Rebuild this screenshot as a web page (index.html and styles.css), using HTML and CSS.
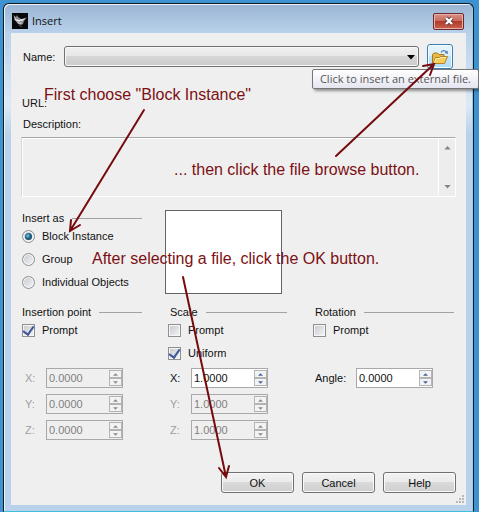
FILE: index.html
```html
<!DOCTYPE html>
<html lang="en">
<head>
<meta charset="utf-8">
<title>Insert</title>
<link rel="stylesheet" href="styles.css">
</head>
<body>
<main class="window">
  <header class="titlebar">
    <svg class="app-icon" viewBox="0 0 16 16" aria-hidden="true">
      <rect width="16" height="16" fill="#08080a"/>
      <path d="M1 2 L3 5 L2 6 L6 11 L9 12 L11 11 L12 8 L15 4 L12 6 L9 6 L6 4 L5 2 L4 4 Z" fill="#8b8d92"/>
      <path d="M2 3 L4 6 L7 7 L10 6 L14 5 L10 8 L8 8 L7 9 L3 7 Z" fill="#e4e6ea"/>
      <path d="M4 8 L7 10 L10 9 L9 11 L7 11 Z" fill="#c9cbd0"/>
      <path d="M3 5 L5 5 L5 6 Z" fill="#b14a42"/>
      <path d="M6 12 L10 13 L9 14 Z" fill="#55585f"/>
    </svg>
    <h1 class="title">Insert</h1>
    <button class="close" type="button" aria-label="Close">
      <svg viewBox="0 0 12 10" aria-hidden="true">
        <path d="M3 2 L9 8 M9 2 L3 8" stroke="#5b3a3c" stroke-width="4"/>
        <path d="M3 2 L9 8 M9 2 L3 8" stroke="#fff" stroke-width="2.4"/>
      </svg>
    </button>
  </header>

  <form class="content">
    <div class="name-row">
      <label for="name">Name:</label>
      <div class="combo">
        <select id="name"><option></option></select>
        <svg viewBox="0 0 8 5" aria-hidden="true"><path d="M0 0 H8 L4 4.5 Z" fill="#000"/></svg>
      </div>
      <button class="browse" type="button" aria-label="Browse" aria-describedby="tip">
        <svg viewBox="0 0 18 16" aria-hidden="true">
          <path d="M1.5 14 V5.5 L3 4 H6.5 L8 5.5 H13 V9 L12 14 Z" fill="#e8b84a" stroke="#a87a20"/>
          <path d="M2 14.5 L4.5 8.5 H8.5 L9.5 7.5 H16.5 L13.5 14.5 Z" fill="#f8cc5c" stroke="#b18326"/>
          <path d="M3.5 13.5 L5 9.5 H9 L10 8.5 H15" fill="none" stroke="#fff0ac"/>
          <path d="M10 3.5 C11 1 14 1 15.5 3" fill="none" stroke="#5b7fa9" stroke-width="1.2"/>
          <path d="M13.5 4 L17 5 L16.5 1.5 Z" fill="#5b7fa9"/>
        </svg>
        <span class="tooltip" id="tip" role="tooltip">Click to insert an external file.</span>
      </button>
    </div>

    <p class="url">URL:</p>
    <label class="desc-label" for="desc">Description:</label>
    <div class="desc">
      <textarea id="desc" disabled></textarea>
      <div class="scroll">
        <svg viewBox="0 0 8 5" aria-hidden="true"><path d="M0 4.5 H8 L4 0 Z" fill="#858585"/></svg>
        <svg viewBox="0 0 8 5" aria-hidden="true"><path d="M0 0 H8 L4 4.5 Z" fill="#858585"/></svg>
      </div>
    </div>

    <div class="columns middle">
      <section class="group">
        <h2 class="heading">Insert as</h2>
        <div class="options">
          <label class="option"><input type="radio" name="as" checked>Block Instance</label>
          <label class="option"><input type="radio" name="as">Group</label>
          <label class="option"><input type="radio" name="as">Individual Objects</label>
        </div>
      </section>
      <div class="preview"></div>
    </div>

    <div class="columns">
      <section class="group">
        <h2 class="heading">Insertion point</h2>
        <div class="checks">
          <label class="option"><input type="checkbox" checked>Prompt</label>
        </div>
        <div class="fields">
          <div class="field off"><label for="ix">X:</label><div class="spin"><input id="ix" type="text" value="0.0000" disabled><button type="button" disabled aria-label="Up"><svg viewBox="0 0 6 3"><path d="M0 3 H6 L3 0 Z"/></svg></button><button type="button" disabled aria-label="Down"><svg viewBox="0 0 6 3"><path d="M0 0 H6 L3 3 Z"/></svg></button></div></div>
          <div class="field off"><label for="iy">Y:</label><div class="spin"><input id="iy" type="text" value="0.0000" disabled><button type="button" disabled aria-label="Up"><svg viewBox="0 0 6 3"><path d="M0 3 H6 L3 0 Z"/></svg></button><button type="button" disabled aria-label="Down"><svg viewBox="0 0 6 3"><path d="M0 0 H6 L3 3 Z"/></svg></button></div></div>
          <div class="field off"><label for="iz">Z:</label><div class="spin"><input id="iz" type="text" value="0.0000" disabled><button type="button" disabled aria-label="Up"><svg viewBox="0 0 6 3"><path d="M0 3 H6 L3 0 Z"/></svg></button><button type="button" disabled aria-label="Down"><svg viewBox="0 0 6 3"><path d="M0 0 H6 L3 3 Z"/></svg></button></div></div>
        </div>
      </section>
      <section class="group">
        <h2 class="heading">Scale</h2>
        <div class="checks outdent">
          <label class="option"><input type="checkbox">Prompt</label>
          <label class="option"><input type="checkbox" checked>Uniform</label>
        </div>
        <div class="fields flush">
          <div class="field"><label for="sx">X:</label><div class="spin"><input id="sx" type="text" value="1.0000"><button type="button" aria-label="Up"><svg viewBox="0 0 6 3"><path d="M0 3 H6 L3 0 Z"/></svg></button><button type="button" aria-label="Down"><svg viewBox="0 0 6 3"><path d="M0 0 H6 L3 3 Z"/></svg></button></div></div>
          <div class="field off"><label for="sy">Y:</label><div class="spin"><input id="sy" type="text" value="1.0000" disabled><button type="button" disabled aria-label="Up"><svg viewBox="0 0 6 3"><path d="M0 3 H6 L3 0 Z"/></svg></button><button type="button" disabled aria-label="Down"><svg viewBox="0 0 6 3"><path d="M0 0 H6 L3 3 Z"/></svg></button></div></div>
          <div class="field off"><label for="sz">Z:</label><div class="spin"><input id="sz" type="text" value="1.0000" disabled><button type="button" disabled aria-label="Up"><svg viewBox="0 0 6 3"><path d="M0 3 H6 L3 0 Z"/></svg></button><button type="button" disabled aria-label="Down"><svg viewBox="0 0 6 3"><path d="M0 0 H6 L3 3 Z"/></svg></button></div></div>
        </div>
      </section>
      <section class="group">
        <h2 class="heading">Rotation</h2>
        <div class="checks outdent">
          <label class="option"><input type="checkbox">Prompt</label>
        </div>
        <div class="fields flush wide">
          <div class="field"><label for="ra">Angle:</label><div class="spin"><input id="ra" type="text" value="0.0000"><button type="button" aria-label="Up"><svg viewBox="0 0 6 3"><path d="M0 3 H6 L3 0 Z"/></svg></button><button type="button" aria-label="Down"><svg viewBox="0 0 6 3"><path d="M0 0 H6 L3 3 Z"/></svg></button></div></div>
        </div>
      </section>
    </div>

    <footer class="actions">
      <button class="action" type="submit">OK</button>
      <button class="action" type="button">Cancel</button>
      <button class="action" type="button">Help</button>
    </footer>
    <svg class="grip" viewBox="0 0 9 9" aria-hidden="true">
      <path d="M6 0h2v2h-2z M3 3h2v2h-2z M6 3h2v2h-2z M0 6h2v2h-2z M3 6h2v2h-2z M6 6h2v2h-2z" fill="#b9b9b9"/>
    </svg>
  </form>
</main>

<div class="notes">
  <svg class="arrows" width="479" height="512" viewBox="0 0 479 512" aria-hidden="true">
    <path d="M144 110 L70 231 M71 220 L70 231 L80 225"/>
    <path d="M336 156 L434 64 M423 66 L434 64 L430 75"/>
    <path d="M183 277 L226 477 M219 468 L226 477 L229 466"/>
  </svg>
  <p class="note first">First choose "Block Instance"</p>
  <p class="note second">... then click the file browse button.</p>
  <p class="note third">After selecting a file, click the OK button.</p>
</div>
</body>
</html>
```
FILE: styles.css
```css
* {
  box-sizing: border-box;
}

body {
  margin: 0;
  min-height: 100vh;
  padding: 3px 5px 0 3px;
  display: flex;
  position: relative;
  background: #3f92d0;
  color: #111;
  font: 11px/14px "Liberation Sans", Arial, sans-serif;
}

h1,
h2,
p {
  margin: 0;
  font-weight: normal;
}

button,
input,
select,
textarea {
  font: inherit;
  color: inherit;
  margin: 0;
  padding: 0;
  border-radius: 0;
}

svg {
  display: block;
}

/* Window frame */
.window {
  flex: 1;
  display: flex;
  flex-direction: column;
  padding: 0 7px 6px;
  border: 1px solid #101820;
  border-bottom: 1px solid #3fc0dc;
  border-radius: 6px 6px 0 0;
  box-shadow: inset 1px 1px 0 #e8f3fc, inset -1px 0 0 #8fd0ee;
  background: linear-gradient(#9ab5d3, #b9d1ea 29px, #dceaf7 100px, #b9d1ea 130px);
}

.titlebar {
  height: 29px;
  display: flex;
  align-items: center;
  padding: 5px 2px 0 1px;
}

.app-icon {
  width: 16px;
  height: 16px;
}

.title {
  flex: 1;
  margin-left: 4px;
  font: 11px/14px "Open Sans", "Noto Sans", sans-serif;
}

.close {
  width: 31px;
  height: 17px;
  display: flex;
  align-items: center;
  justify-content: center;
  border: 1px solid #6b2a2e;
  border-radius: 2px;
  box-shadow: inset 0 0 0 1px #e7b0a8;
  background: linear-gradient(#d99287, #c9695c 45%, #b03a2b 50%, #c9624d);
}

.close svg {
  width: 12px;
  height: 10px;
}

.content {
  flex: 1;
  display: flex;
  flex-direction: column;
  position: relative;
  padding: 11px 10px 12px;
  background: #efefef;
}

/* Name and description */
.name-row {
  display: flex;
  align-items: center;
  gap: 8px;
  padding: 0 3px 0 2px;
}

.name-row label {
  width: 33px;
}

.combo {
  flex: 1;
  position: relative;
}

.combo select {
  display: block;
  appearance: none;
  width: 100%;
  height: 21px;
  border: 1px solid #707070;
  border-radius: 3px;
  box-shadow: inset 0 0 0 1px #f8f8f8;
  background: linear-gradient(#f0f0f0, #e6e6e6 48%, #d6d6d6 50%, #cbcbcb);
}

.combo svg {
  position: absolute;
  right: 4px;
  top: 9px;
  width: 8px;
  height: 5px;
}

.browse {
  position: relative;
  width: 26px;
  height: 25px;
  display: flex;
  align-items: center;
  justify-content: center;
  border: 1px solid #3c7fb1;
  border-radius: 3px;
  box-shadow: inset 0 0 0 1px #f4fbff;
  background: linear-gradient(#e6f4fc, #d8effb 48%, #c0e4f8 50%, #b0dcf3);
}

.browse svg {
  width: 18px;
  height: 16px;
}

.tooltip {
  position: absolute;
  top: 24px;
  right: -27px;
  height: 20px;
  padding: 1px 7px 0;
  border: 1px solid #767676;
  border-radius: 2px;
  box-shadow: 2px 2px 3px #00000066;
  background: linear-gradient(#fff, #e4e5f0);
  color: #575757;
  font: 11px/16px "Open Sans", "Noto Sans", sans-serif;
  white-space: nowrap;
}

.url {
  margin-top: 27px;
  padding-left: 1px;
}

.desc-label {
  margin-top: 7px;
  padding-left: 2px;
}

.desc {
  display: flex;
  height: 60px;
  margin-top: 6px;
  border: 1px solid #fff;
  border-top-color: #a5a5a5;
  border-left-color: #d8d8d8;
  box-shadow: inset 1px 1px 0 #fff;
}

.desc textarea {
  flex: 1;
  border: 0;
  background: none;
  resize: none;
}

.scroll {
  width: 17px;
  display: flex;
  flex-direction: column;
  justify-content: space-between;
  align-items: center;
  margin: 1px 0;
  padding: 7px 0 6px;
  border-left: 1px solid #fff;
  background: #ededed;
}

.scroll svg {
  width: 7px;
  height: 4px;
}

/* Option groups */
.columns {
  display: grid;
  grid-template-columns: 120fr 117fr 139fr;
  gap: 28px;
  margin-top: 11px;
  padding: 0 2px 0 1px;
}

.middle {
  margin-top: 13px;
}

.heading {
  display: flex;
  align-items: center;
  gap: 8px;
  font-size: 11px;
  line-height: 14px;
}

.heading::after {
  content: "";
  flex: 1;
  height: 1px;
  background: #a2a2a2;
}

.middle .heading {
  padding-top: 1px;
}

.option {
  display: flex;
  align-items: center;
  gap: 7px;
  height: 14px;
}

.options {
  display: grid;
  gap: 9px;
  margin-top: 4px;
}

.option input {
  appearance: none;
  flex: none;
  width: 13px;
  height: 13px;
  border: 1px solid #8e8f8f;
  box-shadow: inset 0 0 0 1px #f6f6f6;
  background: linear-gradient(135deg, #c4c8ce, #f6f6f6);
  display: grid;
  place-items: center;
}

.option input[type="radio"] {
  border-radius: 50%;
}

.option input[type="radio"]:checked::before {
  content: "";
  width: 7px;
  height: 7px;
  border-radius: 50%;
  background: radial-gradient(circle at 40% 40%, #7cc8ea, #1d5f85 45%, #0c2d45);
}

.option input[type="checkbox"]:checked::before {
  content: "";
  width: 5px;
  height: 9px;
  border: solid #41579b;
  border-width: 0 2px 2px 0;
  transform: translateY(-1px) rotate(35deg);
}

.preview {
  height: 84px;
  margin-left: -5px;
  margin-right: 5px;
  border: 1px solid #646464;
  background: #fff;
}

.checks {
  display: grid;
  align-content: start;
  gap: 9px;
  height: 45px;
  margin-top: 4px;
}

.outdent {
  margin-left: -2px;
}

.fields {
  display: grid;
  gap: 6px;
  padding-left: 3px;
}

.flush {
  padding-left: 0;
}

.field {
  display: flex;
  align-items: center;
}

.field label {
  width: 21px;
}

.wide .field label {
  width: 41px;
}

.spin {
  display: grid;
  grid-template: 8px 8px / 60px 13px;
  gap: 0 1px;
  width: 77px;
  height: 20px;
  padding: 1px;
  border: 1px solid #a9a9a9;
  background: #fff;
}

.spin input {
  grid-row: span 2;
  min-width: 0;
  padding-left: 1px;
  border: 0;
  background: none;
}

.spin button {
  display: grid;
  place-items: center;
  border: 1px solid #b4b4b4;
  background: #f3f3f3;
}

.spin svg {
  width: 5px;
  height: 3px;
  fill: #4a5f9e;
}

.off {
  color: #a0a0a0;
}

.off .spin {
  background: #efefef;
  color: #808080;
}

.off svg {
  fill: #8c8c8c;
}

/* Footer */
.actions {
  display: flex;
  justify-content: flex-end;
  gap: 8px;
  margin-top: auto;
}

.action {
  width: 73px;
  height: 21px;
  border: 1px solid #707070;
  border-radius: 3px;
  box-shadow: inset 0 0 0 1px #fafafa;
  background: linear-gradient(#f2f2f2, #ebebeb 48%, #dadada 50%, #cfcfcf);
}

.grip {
  position: absolute;
  right: 1px;
  bottom: 1px;
  width: 9px;
  height: 9px;
}

/* Callouts over the dialog */
.notes {
  position: absolute;
  inset: 0;
  overflow: hidden;
  pointer-events: none;
}

.arrows {
  position: absolute;
  left: 0;
  top: 0;
  fill: none;
  stroke: #760b0e;
  stroke-width: 2;
  stroke-linecap: round;
}

.note {
  position: absolute;
  color: #7d1013;
  font-size: 16px;
  line-height: 18px;
  white-space: nowrap;
}

.first {
  left: 44px;
  top: 86px;
}

.second {
  left: 174px;
  top: 161px;
}

.third {
  left: 92px;
  top: 250px;
}
```
